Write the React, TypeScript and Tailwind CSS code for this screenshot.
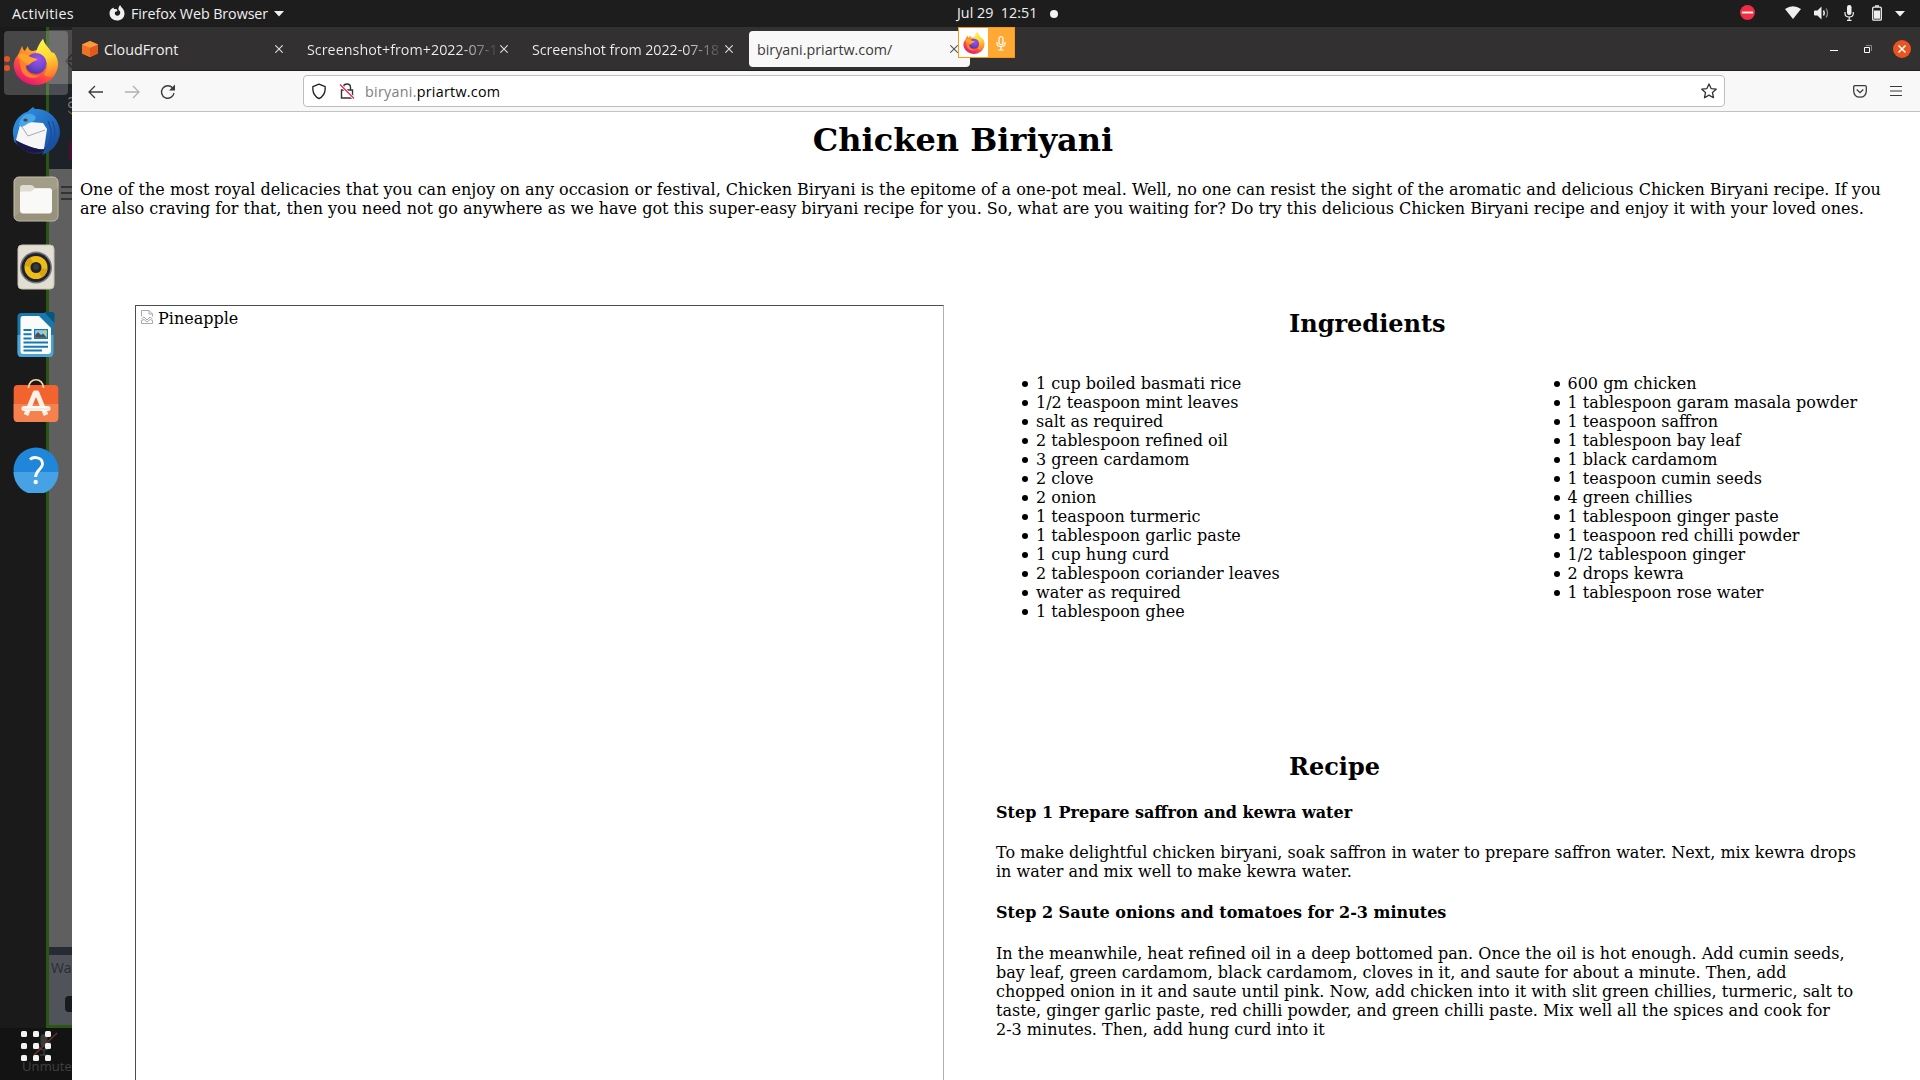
import React from "react";

const UI = "font-['Open_Sans','Noto_Sans',sans-serif]";

const leftItems = [
  "1 cup boiled basmati rice",
  "1/2 teaspoon mint leaves",
  "salt as required",
  "2 tablespoon refined oil",
  "3 green cardamom",
  "2 clove",
  "2 onion",
  "1 teaspoon turmeric",
  "1 tablespoon garlic paste",
  "1 cup hung curd",
  "2 tablespoon coriander leaves",
  "water as required",
  "1 tablespoon ghee",
];

const rightItems = [
  "600 gm chicken",
  "1 tablespoon garam masala powder",
  "1 teaspoon saffron",
  "1 tablespoon bay leaf",
  "1 black cardamom",
  "1 teaspoon cumin seeds",
  "4 green chillies",
  "1 tablespoon ginger paste",
  "1 teaspoon red chilli powder",
  "1/2 tablespoon ginger",
  "2 drops kewra",
  "1 tablespoon rose water",
];

function FirefoxIcon({ id, className }: { id: string; className: string }) {
  const body = id + "-body";
  const globe = id + "-globe";
  const flame = id + "-flame";
  return (
    <svg viewBox="0 0 46 46" className={className}>
      <defs>
        <linearGradient id={body} x1="0.8" y1="0.1" x2="0.3" y2="1">
          <stop offset="0" stopColor="#ffe141" />
          <stop offset="0.35" stopColor="#ffa025" />
          <stop offset="0.65" stopColor="#ff4f3d" />
          <stop offset="1" stopColor="#e6107a" />
        </linearGradient>
        <radialGradient id={globe} cx="0.6" cy="0.3" r="0.7">
          <stop offset="0" stopColor="#a050f0" />
          <stop offset="0.6" stopColor="#7048d0" />
          <stop offset="1" stopColor="#5038a0" />
        </radialGradient>
        <linearGradient id={flame} x1="0.4" y1="0" x2="0.6" y2="1">
          <stop offset="0" stopColor="#fff44f" />
          <stop offset="0.5" stopColor="#ffd535" />
          <stop offset="1" stopColor="#ff7a2a" />
        </linearGradient>
      </defs>
      <path
        d="M5 16 C6 13 8 10 9 7 C10 9 10 11 12 12 C13 10 14 8 15 7 C15 10 17 12 20 12 L27 10 C27 6 28 3 30 0 C31 6 36 8 38 13 C40 13 40 14 41 14 C45 19 46 25 44 31 C41 40 33 46 23 46 C12 46 3 39 1 29 C0 24 2 19 5 16Z"
        fill={`url(#${body})`}
      />
      <path d="M23 13 C25 7 27 3 30 0 C31 6 37 9 39 15 L41 14 C46 22 45 31 40 36 C37 39 33 38 31 35 C36 30 35 22 31 18 C28 15 24 15 22 16Z" fill={`url(#${flame})`} />
      <circle cx="23" cy="24.500" r="10.500" fill={`url(#${globe})`} />
      <path d="M5 19 C9 15 14 16 17 18 L24 20 C24 22 19 22 18 24 C16 27 14 26 12.500 27 C13 34 20 38 28 36 C20 42 10 38 8 30 C7 26 7 22 5 19Z" fill="#ff7f2e" />
      <path d="M5 16 C9 13 14 14 17 18 L24 20 C24 22 20 22 18 24 C15 26 12 24 6 19Z" fill="#ffa32a" />
    </svg>
  );
}

function ThunderbirdIcon() {
  return (
    <svg viewBox="0 0 48 48" className="h-12 w-12">
      <defs>
        <linearGradient id="tb" x1="0" y1="0" x2="1" y2="1">
          <stop offset="0" stopColor="#2f9be8" />
          <stop offset="0.6" stopColor="#2168bd" />
          <stop offset="1" stopColor="#173c86" />
        </linearGradient>
      </defs>
      <circle cx="24" cy="25" r="22" fill="#1f2d68" />
      <path d="M1 27 C0 17 7 7 15 5 L21 0 L23 2 C36 1 48 12 48 26 C47 36 41 44 30 48 L34 40 C24 46 8 42 2 34Z" fill="url(#tb)" />
      <path d="M4 33 L8 18 L17 15 L31 16 L35 22 L32 42 C23 43 12 38 4 33Z" fill="#f6f6f7" />
      <path d="M8 17 L16 29 L33 23" fill="none" stroke="#a6a8ad" strokeWidth="1" />
      <path d="M7 17 C9 9 14 6 19 7 C25 8 25 13 20 15 C15 16 12 20 9 20Z" fill="#49a5e8" />
      <ellipse cx="13.500" cy="13" rx="2.200" ry="1.600" fill="#3b4757" />
      <path d="M3 33 C12 38 24 42 32 43 C24 49 8 45 3 33Z" fill="#1c1642" />
      <path d="M36 14 C41 24 40 33 35 41 M40 14 C45 23 43 33 38 40" fill="none" stroke="#174f9d" strokeWidth="1.300" />
    </svg>
  );
}

function FilesIcon() {
  return (
    <svg viewBox="0 0 46 46" className="h-[46px] w-[46px]">
      <rect x="1" y="1" width="44" height="44" rx="5" fill="#a39c86" stroke="#c6c0ae" />
      <path d="M1.5 40 L44.500 12 V40 Q44 44.500 40 44.500 H6 Q2 44.500 1.500 40Z" fill="#918b77" opacity="0.6" />
      <path d="M7 12 Q7 9 10 9 H18 Q20 9 22 12 H36 Q39 12 39 15 V20 H7Z" fill="#dfdcd2" />
      <path d="M7 17 Q7 15.500 9 15.500 H18 L22 12.500 H36 Q39 12.500 39 15.500 V34 Q39 37.500 36 37.500 H10 Q7 37.500 7 34Z" fill="#f9f9f8" />
    </svg>
  );
}

function RhythmboxIcon() {
  return (
    <svg viewBox="0 0 38 46" className="h-[46px] w-[38px]">
      <rect x="1" y="1" width="36" height="44" rx="4" fill="#e3ded2" stroke="#c9c3b5" strokeWidth="1" />
      <circle cx="19" cy="23.500" r="16" fill="#777985" />
      <circle cx="19" cy="23.500" r="14.500" fill="#20222c" />
      <circle cx="19" cy="23.500" r="11.500" fill="#eebd18" />
      <path d="M19 23.500 L7.500 22 A11.500 11.500 0 0 1 13 13.500Z M19 23.500 L30.500 25 A11.500 11.500 0 0 1 25 33.500Z" fill="#d6a20f" />
      <circle cx="19" cy="23.500" r="5.500" fill="#20232b" />
      <circle cx="19" cy="23" r="3" fill="#373a42" />
    </svg>
  );
}

function WriterIcon() {
  return (
    <svg viewBox="0 0 38 46" className="h-[46px] w-[38px]">
      <rect x="0.500" y="1" width="36" height="44" rx="4" fill="#1778ae" />
      <path d="M0.500 23 H36.500 V41 Q36 45 33 45 H4 Q1 45 0.500 41Z" fill="#4ba3d6" />
      <path d="M3.500 7 Q3.500 4 6 4 H22 L34 16 V39 Q34 42 31 42 H6 Q3.500 42 3.500 39Z" fill="#fbfbfb" />
      <path d="M27 0 H35 Q37.500 0 37.500 3 V11Z" fill="#075680" />
      <path d="M6.500 18 H14.500 M6.500 22.200 H14.500 M6.500 26.400 H14.500 M6.500 30.600 H31 M6.500 34.800 H31 M6.500 38.500 H25" stroke="#1879b2" strokeWidth="2" />
      <rect x="17" y="17" width="14" height="10" fill="#1879b2" />
      <rect x="18.200" y="18.200" width="11.600" height="7.600" fill="#91cbe9" />
      <path d="M18.200 25.800 V23 L21 20 L24 23 L26 21.500 L29.800 25.800Z" fill="#4a4f52" />
      <circle cx="28.300" cy="19.800" r="1.500" fill="#f1c71c" />
    </svg>
  );
}

function SoftwareIcon() {
  return (
    <svg viewBox="0 0 46 46" className="h-[46px] w-[46px]">
      <rect x="0.700" y="7" width="44.600" height="37" rx="4" fill="#f26330" />
      <path d="M0.700 26 H45.300 V40 Q45 44 41 44 H5 Q1 44 0.700 40Z" fill="#f5814f" />
      <path d="M15.500 10 C15.500 -1 30.500 -1 30.500 10" fill="none" stroke="#f3d9ad" strokeWidth="1.700" />
      <path d="M13 37 L22 15 H24 L33 37" fill="none" stroke="#fff1e8" strokeWidth="4.800" strokeLinejoin="round" />
      <path d="M11 30.500 H35" stroke="#fffaf6" strokeWidth="5" strokeLinecap="round" />
      <path d="M10 31 H36" stroke="#f6c9ae" strokeWidth="0.700" />
    </svg>
  );
}

function HelpIcon() {
  return (
    <svg viewBox="0 0 46 46" className="h-[46px] w-[46px]">
      <circle cx="23" cy="23" r="22.500" fill="#1f86d9" />
      <path d="M0.500 25 H45.500 A22.500 22.500 0 0 1 0.500 25Z" fill="#46a2e4" />
      <path d="M17 12.500 C20 9.500 29.500 9.500 29.500 17 C29.500 22.500 22.700 22.500 22.700 30" fill="none" stroke="#fff" strokeWidth="2.900" />
      <circle cx="22.700" cy="35" r="2.200" fill="#fff" />
    </svg>
  );
}

function Dock() {
  return (
    <aside className="relative h-[1053px] w-[72px] shrink-0 overflow-hidden bg-[#1a1a1a]">
      {/* Dimmed meeting window showing through the translucent dock */}
      <div className="absolute top-0 right-0 flex h-[1001px] w-[26px] flex-col border-b-[3px] border-l-[3px] border-[#2a5513]">
        <div className="h-[3px] shrink-0 bg-[#222]" />
        <div className="flex h-[54px] shrink-0 items-center justify-end bg-[#4b4b4b] pt-[8px]">
          <svg viewBox="0 0 7 14" className="h-[14px] w-[7px]" fill="none" stroke="#2a2a2a" strokeWidth="1.500"><path d="M7 0.500L1 7L7 13.500M1 7H7" /></svg>
        </div>
        <div className="flex h-[85px] shrink-0 flex-col items-end justify-between bg-[#1d2228] pt-[13px]">
          <svg viewBox="0 0 4 18" className="h-[18px] w-1" fill="none"><path d="M0.500 2Q2 0.500 4 0.500M4 5Q0.700 5 0.700 8Q0.700 10.500 4 10.500" stroke="#777" strokeWidth="1.300" /><path d="M0 14L4 17" stroke="#8a5a1c" strokeWidth="1.300" /></svg>
          <div className="mb-[9px] h-[19px] w-[3px] bg-[#4a1034]" />
        </div>
        <div className="flex h-[778px] shrink-0 flex-col items-end gap-[4px] bg-[#5f5f5f] pt-[17px]">
          <div className="h-[2px] w-[11px] bg-[#333]" />
          <div className="h-[2px] w-[11px] bg-[#333]" />
          <div className="h-[2px] w-[11px] bg-[#333]" />
        </div>
        <div className="h-2 shrink-0 bg-[#272b32]" />
        <div className="flex h-[70px] shrink-0 flex-col items-end bg-[#50545a]">
          <div className={`h-[41px] w-full pt-[3px] pl-[2px] text-[14px] leading-5 tracking-[-0.3px] text-[#2a2c2f] ${UI}`}>Wa</div>
          <div className="h-4 w-[7px] rounded-l bg-[#191a1c]" />
        </div>
      </div>
      <div className="absolute bottom-0 h-[52px] w-full bg-[#131313]" />

      <div className="relative flex h-[476px] flex-col items-center pt-1">
        <div className="relative flex h-16 w-16 items-center justify-center rounded-[4px] bg-white/20">
          <div className="absolute left-0 flex flex-col gap-[3px]">
            <i className="h-[6px] w-[6px] rounded-full bg-[#e95420]" />
            <i className="h-[6px] w-[6px] rounded-full bg-[#e95420]" />
          </div>
          <FirefoxIcon id="dock" className="mb-[3px] h-[46px] w-[46px]" />
        </div>
        <div className="mt-[12px] flex h-12 items-center"><ThunderbirdIcon /></div>
        <div className="mt-[21px]"><FilesIcon /></div>
        <div className="mt-[22px]"><RhythmboxIcon /></div>
        <div className="mt-[22px]"><WriterIcon /></div>
        <div className="mt-[20px]"><SoftwareIcon /></div>
        <div className="mt-[23px]"><HelpIcon /></div>
      </div>

      <div className={`absolute bottom-[4px] left-[22px] text-[13px] leading-5 tracking-[0.1px] text-[#414141] ${UI}`}>Unmute</div>
      <svg viewBox="0 0 38 34" className="absolute bottom-[19px] left-[20px] h-[34px] w-[38px]">
        <rect x="20.500" y="7" width="7" height="13" rx="3.500" fill="#3a3a3a" />
        <path d="M18 15 Q18 23 24 23 Q30 23 30 15 M24 23 V28 M20 28 H28" fill="none" stroke="#3a3a3a" strokeWidth="1.500" />
        <path d="M14 28 L37 6" stroke="#6b3030" strokeWidth="1.500" />
      </svg>
      <div className="absolute bottom-[19px] left-[21px] grid grid-cols-3 gap-[6px]">
        {Array.from({ length: 9 }, (_, i) => (
          <i key={i} className="h-[6px] w-[6px] rounded-[1.5px] bg-[#f3f3f3]" />
        ))}
      </div>
    </aside>
  );
}

function TopBar() {
  return (
    <header className={`flex h-[27px] items-center bg-[#1d1d1d] text-[14.3px] text-[#f0f0f0] ${UI}`}>
      <span className="ml-3 w-[97px] tracking-[0.3px]">Activities</span>
      <svg viewBox="0 0 16 16" className="mb-[1px] h-4 w-4">
        <path d="M3 3.500 L4.500 2.500 L5 4 L7.500 4 L8.500 6 L6 7 C5 10 8 11.500 10 10.200 C12 8.500 11.500 6 9.500 5 C9.200 3 10 1 11.200 0 C11.500 2 15.500 4 15.500 8.500 C15.500 13 12 15.500 8 15.500 C4 15.500 0.500 12.500 0.500 8.300 C0.500 6 1.500 4.500 3 3.500Z" fill="#f0f0f0" />
      </svg>
      <span className="ml-[6px] w-[143px] tracking-[-0.08px] whitespace-nowrap">Firefox Web Browser</span>
      <svg viewBox="0 0 10 6" className="h-[6px] w-[10px]"><path d="M0 0H10L5 5.500Z" fill="#f0f0f0" /></svg>
      <span className="mb-[1px] ml-[673px] w-[93px] tracking-[0.02px] whitespace-pre">{"Jul 29  12:51"}</span>
      <i className="h-2 w-2 rounded-full bg-[#f3f3f3]" />
      <div className="mr-[15px] mb-[2px] ml-auto flex items-center">
        <svg viewBox="0 0 16 16" className="mr-[30px] h-[15px] w-[15px]"><circle cx="8" cy="8" r="8" fill="#f22c42" /><path d="M2 8H14" stroke="#fff" strokeWidth="2" /></svg>
        <svg viewBox="0 0 16 13" className="mr-[13px] h-[13px] w-4"><path d="M0 3 Q8 -2.500 16 3 L8 13Z" fill="#efefef" /></svg>
        <svg viewBox="0 0 16 14" className="mr-[14px] h-[14px] w-4">
          <path d="M1 4.500H3.500L7.500 0.500V13.500L3.500 9.500H1Q0 9.500 0 8.500V5.500Q0 4.500 1 4.500Z" fill="#efefef" />
          <path d="M9.500 4.500Q11 7 9.500 9.500" fill="none" stroke="#efefef" strokeWidth="1.500" />
          <path d="M12 2.500Q15 7 12 11.500" fill="none" stroke="#8b8b8b" strokeWidth="1.300" />
        </svg>
        <svg viewBox="0 0 10 16" className="mr-[18px] h-4 w-[10px]"><rect x="3" y="0" width="4.500" height="10" rx="2.200" fill="#efefef" /><path d="M1 7V8.500Q1 12 5.200 12Q9.300 12 9.300 8.500V7M5.200 12V15.300M3 15.300H7.500" fill="none" stroke="#efefef" strokeWidth="1.200" /></svg>
        <svg viewBox="0 0 10 16" className="mr-[13px] h-4 w-[10px]"><rect x="0.700" y="2.200" width="8.600" height="13" rx="1" fill="none" stroke="#efefef" strokeWidth="1.300" /><path d="M3 1H7" stroke="#efefef" strokeWidth="1.500" /><rect x="2" y="5.500" width="6" height="8.200" fill="#efefef" /></svg>
        <svg viewBox="0 0 10 6" className="mt-[2px] h-[6px] w-[10px]"><path d="M0 0H10L5 5.500Z" fill="#f0f0f0" /></svg>
      </div>
    </header>
  );
}

function Cross({ className }: { className: string }) {
  return (
    <svg viewBox="0 0 8 8" className={`h-2 w-2 shrink-0 ${className}`}>
      <path d="M0.300 0.300L7.700 7.700M7.700 0.300L0.300 7.700" stroke="currentColor" strokeWidth="1.100" />
    </svg>
  );
}

function TabStrip() {
  const fade = "whitespace-nowrap bg-linear-to-r from-[#f0f0f0] from-80% to-[#4a4648] bg-clip-text text-transparent";
  return (
    <div className={`relative flex h-11 items-center border-b border-[#1f1d1e] bg-[#333031] text-[14.3px] text-[#f0f0f0] ${UI}`}>
      <svg viewBox="0 0 16 16" className="ml-[10px] h-4 w-4">
        <path d="M8 0L16 3.500V12.500L8 16L0 12.500V3.500Z" fill="#f58536" />
        <path d="M8 6.500V16L16 12.500V3.500Z" fill="#e05a20" />
        <path d="M0 3.500L8 6.500V16L0 12.500Z" fill="#ee7223" />
        <path d="M0 3.500L8 0L16 3.500L8 6.700Z" fill="#f99b3c" />
      </svg>
      <span className="mt-[2px] ml-[6px] w-[171px]">CloudFront</span>
      <Cross className="text-[#ddd]" />
      <span className={`mt-[2px] ml-[24px] w-[190px] tracking-[0.03px] ${fade}`}>Screenshot+from+2022-07-1</span>
      <Cross className="ml-[3px] text-[#ddd]" />
      <span className={`mt-[2px] ml-[24px] w-[189px] tracking-[-0.08px] ${fade}`}>Screenshot from 2022-07-18</span>
      <Cross className="ml-[4px] text-[#ddd]" />
      <div className="ml-[16px] flex h-9 w-[221px] items-center rounded-[4px] bg-[#f8f8f8] pl-2 text-[#3a3a3a]">
        <span className="mt-[2px] w-[193px]">biryani.priartw.com/</span>
        <Cross className="text-[#555]" />
      </div>
      <div className="absolute top-0 left-[886px] flex h-[31px] w-[57px] border border-[#f79a10] bg-[#ffa833]">
        <div className="flex w-[29px] items-center justify-center bg-white"><FirefoxIcon id="share" className="h-[22px] w-[22px]" /></div>
        <div className="flex flex-1 items-center justify-center pt-[1px]">
          <svg viewBox="0 0 10 15" className="h-[15px] w-[10px]" fill="none" stroke="#fff" strokeWidth="1.200"><rect x="3" y="0.700" width="4" height="8" rx="2" /><path d="M1 6V7.500Q1 10.500 5 10.500Q9 10.500 9 7.500V6M5 10.500V14M2.300 14H7.700" /></svg>
        </div>
      </div>
      <div className="mr-[9px] ml-auto flex items-center">
        <div className="mt-[4px] mr-[26px] h-px w-2 bg-white" />
        <svg viewBox="0 0 8 8" className="mr-[21px] h-2 w-2 overflow-visible"><path d="M0.500 2.500H5.500V7.500H0.500Z" fill="none" stroke="#fff" /><path d="M2 0.500H7.500V6" fill="none" stroke="#888" /></svg>
        <svg viewBox="0 0 18 18" className="h-[18px] w-[18px]"><circle cx="9" cy="9" r="9" fill="#e95420" /><path d="M5.500 5.500L12.500 12.500M12.500 5.500L5.500 12.500" stroke="#fff" strokeWidth="1.500" /></svg>
      </div>
    </div>
  );
}

function Toolbar() {
  return (
    <div className="flex h-[41px] items-center border-b border-[#c2c2c2] bg-[#f8f8f8]">
      <svg viewBox="0 0 16 14" className="mt-[1px] ml-4 h-[14px] w-4" fill="none" stroke="#3b3b3b" strokeWidth="1.300"><path d="M15 7H1M7 1L1 7L7 13" /></svg>
      <svg viewBox="0 0 16 14" className="mt-[1px] ml-5 h-[14px] w-4" fill="none" stroke="#b0b0b0" strokeWidth="1.300"><path d="M1 7H15M9 1L15 7L9 13" /></svg>
      <svg viewBox="0 0 16 16" className="mt-[2px] ml-5 h-4 w-4"><path d="M14 9A6.300 6.300 0 1 1 12.500 3.800" fill="none" stroke="#3b3b3b" strokeWidth="1.400" /><path d="M15 0.500V6.500H9Z" fill="#3b3b3b" /></svg>
      <div className={`ml-[127px] flex h-8 w-[1422px] items-center rounded-[4px] border border-[#bebebe] bg-white text-[14.3px] text-black ${UI}`}>
        <svg viewBox="0 0 16 18" className="ml-[7px] h-[17px] w-4" fill="none" stroke="#222" strokeWidth="1.400"><path d="M8 1.200L14.500 3.800V7Q14 13.500 8 16.500Q2 13.500 1.500 7V3.800Z" strokeLinejoin="round" /></svg>
        <svg viewBox="0 0 16 16" className="ml-[12px] h-4 w-4" fill="none"><path d="M4.500 7V4.500Q4.500 1 8 1Q11.500 1 11.500 4.500V7M2.500 7H13.500V15H2.500Z" stroke="#333" strokeWidth="1.400" /><path d="M1 1.500L15 15.500" stroke="#fff" strokeWidth="3" /><path d="M1 1.500L15 15.500" stroke="#e22850" strokeWidth="1.300" /></svg>
        <span className="mt-[2px] ml-[10px] tracking-[0.28px]"><span className="text-[#808080]">biryani.</span>priartw.com</span>
        <svg viewBox="0 0 16 16" className="mr-[7px] ml-auto h-4 w-4"><path d="M8 1L10.100 5.600L15.200 6.200L11.500 9.600L12.500 14.700L8 12.100L3.500 14.700L4.500 9.600L0.800 6.200L5.900 5.600Z" fill="none" stroke="#333" strokeWidth="1.300" strokeLinejoin="round" /></svg>
      </div>
      <svg viewBox="0 0 14 13" className="ml-[128px] h-[13px] w-[14px]" fill="none" stroke="#3b3b3b" strokeWidth="1.300"><path d="M2 0.700H12Q13.300 0.700 13.300 2V6Q13 12.200 7 12.200Q1 12.200 0.700 6V2Q0.700 0.700 2 0.700ZM3.700 4.500L7 7.700L10.300 4.500" /></svg>
      <svg viewBox="0 0 12 10" className="ml-[23px] h-[10px] w-3"><path d="M0 0.500H12M0 5H12M0 9.500H12" stroke="#3b3b3b" strokeWidth="1.200" /></svg>
    </div>
  );
}

function BulletList({ items }: { items: string[] }) {
  return (
    <ul>
      {items.map((item) => (
        <li key={item} className="flex h-[19px] items-center whitespace-nowrap">
          <i className="mt-[1px] mr-[8px] h-[6px] w-[6px] rounded-full bg-black" />
          {item}
        </li>
      ))}
    </ul>
  );
}

function RecipePage() {
  return (
    <main className="h-[968px] overflow-hidden bg-white px-2 font-['DejaVu_Serif',serif] text-[16px] leading-[19px] text-black">
      <h1 className="pt-[10px] pr-[66px] text-center text-[32px] leading-[37px] font-bold">Chicken Biriyani</h1>
      <p className="mt-[21px] whitespace-nowrap">
        One of the most royal delicacies that you can enjoy on any occasion or festival, Chicken Biryani is the epitome of a one-pot meal. Well, no one can resist the sight of the aromatic and delicious Chicken Biryani recipe. If you
        <br />
        are also craving for that, then you need not go anywhere as we have got this super-easy biryani recipe for you. So, what are you waiting for? Do try this delicious Chicken Biryani recipe and enjoy it with your loved ones.
      </p>
      <div className="mt-[87px] flex">
        <div className="ml-[55px] flex h-[800px] w-[809px] shrink-0 items-start border border-t-[#4d4d4d] border-r-[#b0b0b0] border-b-[#b0b0b0] border-l-[#4d4d4d] pt-[3px] pl-[5px]">
          <svg viewBox="0 0 12 14" className="mt-[1px] h-[14px] w-3" fill="none" stroke="#a9a9a9"><path d="M0.500 6.500V0.500H8L11.500 4V6.500M8 0.500V4H11.500M0.500 9L3 7L6 10L9 7L11.500 9M0.500 10.500V13.500H11.500V10.500L9 9.500L6 12L3 9.500Z" /></svg>
          <span className="ml-[5px]">Pineapple</span>
        </div>
        <div className="ml-[52px] w-[880px] shrink-0">
          <h2 className="pt-[5px] pl-[293px] text-2xl leading-7 font-bold">Ingredients</h2>
          <div className="mt-[36px] flex h-[247px] pl-[26px]">
            <div className="w-[531.5px]"><BulletList items={leftItems} /></div>
            <BulletList items={rightItems} />
          </div>
          <h2 className="mt-[132px] pl-[293px] text-2xl leading-7 font-bold">Recipe</h2>
          <h4 className="mt-[22px] font-bold">Step 1 Prepare saffron and kewra water</h4>
          <p className="mt-[21px] whitespace-nowrap">
            To make delightful chicken biryani, soak saffron in water to prepare saffron water. Next, mix kewra drops
            <br />
            in water and mix well to make kewra water.
          </p>
          <h4 className="mt-[22px] font-bold">Step 2 Saute onions and tomatoes for 2-3 minutes</h4>
          <p className="mt-[22px] whitespace-nowrap">
            In the meanwhile, heat refined oil in a deep bottomed pan. Once the oil is hot enough. Add cumin seeds,
            <br />
            bay leaf, green cardamom, black cardamom, cloves in it, and saute for about a minute. Then, add
            <br />
            chopped onion in it and saute until pink. Now, add chicken into it with slit green chillies, turmeric, salt to
            <br />
            taste, ginger garlic paste, red chilli powder, and green chilli paste. Mix well all the spices and cook for
            <br />
            2-3 minutes. Then, add hung curd into it
          </p>
        </div>
      </div>
    </main>
  );
}

export default function App() {
  return (
    <div className="h-[1080px] w-[1920px] overflow-hidden bg-white">
      <TopBar />
      <div className="flex">
        <Dock />
        <section className="w-[1848px]">
          <TabStrip />
          <Toolbar />
          <RecipePage />
        </section>
      </div>
    </div>
  );
}
